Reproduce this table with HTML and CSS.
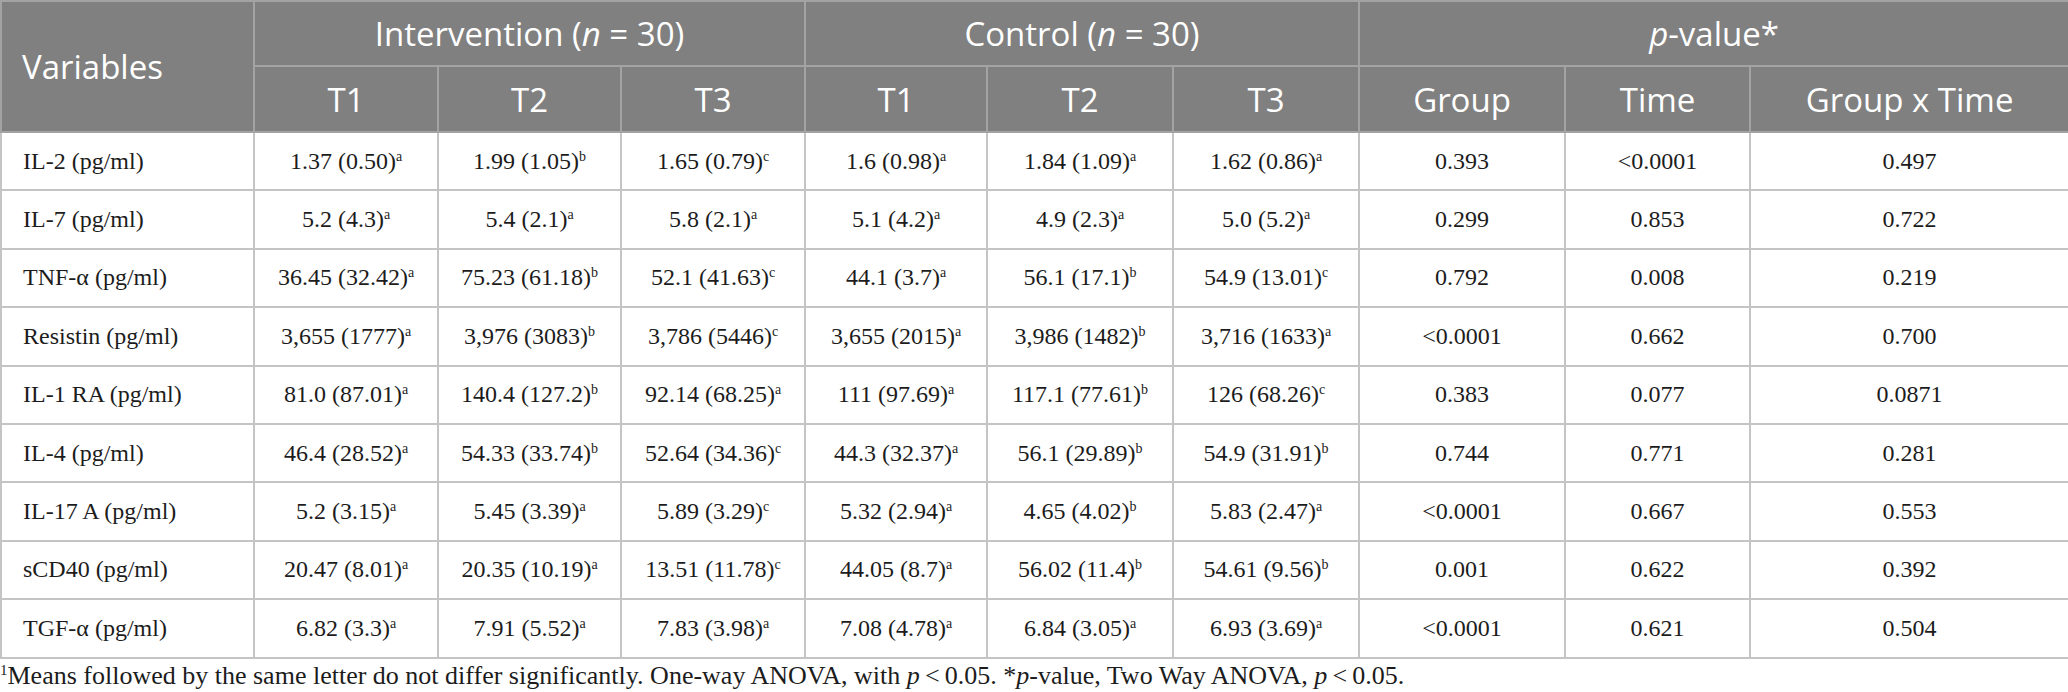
FILE: index.html
```html
<!DOCTYPE html>
<html>
<head>
<meta charset="utf-8">
<link rel="stylesheet" href="styles.css">
</head>
<body>
<table class="data">
<colgroup>
<col class="c-var"><col class="c-t1"><col class="c-t2"><col class="c-t3"><col class="c-t4"><col class="c-t5"><col class="c-t6"><col class="c-grp"><col class="c-time"><col class="c-gxt">
</colgroup>
<thead>
<tr class="h1">
<th rowspan="2" class="var-h">Variables</th>
<th colspan="3">Intervention (<i>n</i> = 30)</th>
<th colspan="3">Control (<i>n</i> = 30)</th>
<th colspan="3"><i>p</i>-value*</th>
</tr>
<tr class="h2">
<th>T1</th><th>T2</th><th>T3</th>
<th>T1</th><th>T2</th><th>T3</th>
<th>Group</th><th>Time</th><th>Group x Time</th>
</tr>
</thead>
<tbody>
<tr><td class="var">IL-2 (pg/ml)</td><td>1.37 (0.50)<sup>a</sup></td><td>1.99 (1.05)<sup>b</sup></td><td>1.65 (0.79)<sup>c</sup></td><td>1.6 (0.98)<sup>a</sup></td><td>1.84 (1.09)<sup>a</sup></td><td>1.62 (0.86)<sup>a</sup></td><td>0.393</td><td>&lt;0.0001</td><td>0.497</td></tr>
<tr><td class="var">IL-7 (pg/ml)</td><td>5.2 (4.3)<sup>a</sup></td><td>5.4 (2.1)<sup>a</sup></td><td>5.8 (2.1)<sup>a</sup></td><td>5.1 (4.2)<sup>a</sup></td><td>4.9 (2.3)<sup>a</sup></td><td>5.0 (5.2)<sup>a</sup></td><td>0.299</td><td>0.853</td><td>0.722</td></tr>
<tr><td class="var">TNF-α (pg/ml)</td><td>36.45 (32.42)<sup>a</sup></td><td>75.23 (61.18)<sup>b</sup></td><td>52.1 (41.63)<sup>c</sup></td><td>44.1 (3.7)<sup>a</sup></td><td>56.1 (17.1)<sup>b</sup></td><td>54.9 (13.01)<sup>c</sup></td><td>0.792</td><td>0.008</td><td>0.219</td></tr>
<tr><td class="var">Resistin (pg/ml)</td><td>3,655 (1777)<sup>a</sup></td><td>3,976 (3083)<sup>b</sup></td><td>3,786 (5446)<sup>c</sup></td><td>3,655 (2015)<sup>a</sup></td><td>3,986 (1482)<sup>b</sup></td><td>3,716 (1633)<sup>a</sup></td><td>&lt;0.0001</td><td>0.662</td><td>0.700</td></tr>
<tr><td class="var">IL-1 RA (pg/ml)</td><td>81.0 (87.01)<sup>a</sup></td><td>140.4 (127.2)<sup>b</sup></td><td>92.14 (68.25)<sup>a</sup></td><td>111 (97.69)<sup>a</sup></td><td>117.1 (77.61)<sup>b</sup></td><td>126 (68.26)<sup>c</sup></td><td>0.383</td><td>0.077</td><td>0.0871</td></tr>
<tr><td class="var">IL-4 (pg/ml)</td><td>46.4 (28.52)<sup>a</sup></td><td>54.33 (33.74)<sup>b</sup></td><td>52.64 (34.36)<sup>c</sup></td><td>44.3 (32.37)<sup>a</sup></td><td>56.1 (29.89)<sup>b</sup></td><td>54.9 (31.91)<sup>b</sup></td><td>0.744</td><td>0.771</td><td>0.281</td></tr>
<tr><td class="var">IL-17 A (pg/ml)</td><td>5.2 (3.15)<sup>a</sup></td><td>5.45 (3.39)<sup>a</sup></td><td>5.89 (3.29)<sup>c</sup></td><td>5.32 (2.94)<sup>a</sup></td><td>4.65 (4.02)<sup>b</sup></td><td>5.83 (2.47)<sup>a</sup></td><td>&lt;0.0001</td><td>0.667</td><td>0.553</td></tr>
<tr><td class="var">sCD40 (pg/ml)</td><td>20.47 (8.01)<sup>a</sup></td><td>20.35 (10.19)<sup>a</sup></td><td>13.51 (11.78)<sup>c</sup></td><td>44.05 (8.7)<sup>a</sup></td><td>56.02 (11.4)<sup>b</sup></td><td>54.61 (9.56)<sup>b</sup></td><td>0.001</td><td>0.622</td><td>0.392</td></tr>
<tr><td class="var">TGF-α (pg/ml)</td><td>6.82 (3.3)<sup>a</sup></td><td>7.91 (5.52)<sup>a</sup></td><td>7.83 (3.98)<sup>a</sup></td><td>7.08 (4.78)<sup>a</sup></td><td>6.84 (3.05)<sup>a</sup></td><td>6.93 (3.69)<sup>a</sup></td><td>&lt;0.0001</td><td>0.621</td><td>0.504</td></tr>
</tbody>
</table>
<p class="note"><sup class="n1">1</sup>Means followed by the same letter do not differ significantly. One-way ANOVA, with <i>p</i>&#8201;&lt;&#8201;0.05. *<i>p</i>-value, Two Way ANOVA, <i>p</i>&#8201;&lt;&#8201;0.05.</p>
</body>
</html>
```

FILE: styles.css
```css
html, body {
  margin: 0;
  padding: 0;
  background: #ffffff;
}

.data {
  width: 2068px;
  table-layout: fixed;
  border-collapse: collapse;
  font-family: "Liberation Serif", "Times New Roman", serif;
  color: #1c1c1c;
}

.c-var { width: 253px; }
.c-t1 { width: 184px; }
.c-t2 { width: 183px; }
.c-t3 { width: 184px; }
.c-t4 { width: 182px; }
.c-t5 { width: 186px; }
.c-t6 { width: 186px; }
.c-grp { width: 206px; }
.c-time { width: 185px; }
.c-gxt { width: 319px; }

.data th {
  background: #808080;
  color: #ffffff;
  font-family: "Open Sans", "Noto Sans", sans-serif;
  font-weight: 400;
  font-size: 33px;
  border: 2px solid #a3a3a3;
  padding: 0;
  text-align: center;
  vertical-align: middle;
}

.data .h1 th { height: 63px; }
.data .h2 th { height: 64px; }

.data th.var-h {
  text-align: left;
  padding-left: 20px;
}

.data td {
  border: 2px solid #c4c4c4;
  height: 56.4px;
  padding: 0;
  font-size: 24px;
  text-align: center;
  vertical-align: middle;
}

.data td.var {
  text-align: left;
  padding-left: 21px;
}

.data sup {
  font-size: 14px;
  vertical-align: 8px;
  line-height: 0;
}

.note {
  margin: 0;
  padding-top: 1px;
  font-family: "Liberation Serif", "Times New Roman", serif;
  font-size: 26px;
  line-height: 32px;
  color: #1c1c1c;
}

.note .n1 {
  font-size: 15px;
  vertical-align: 9px;
  line-height: 0;
}
```
